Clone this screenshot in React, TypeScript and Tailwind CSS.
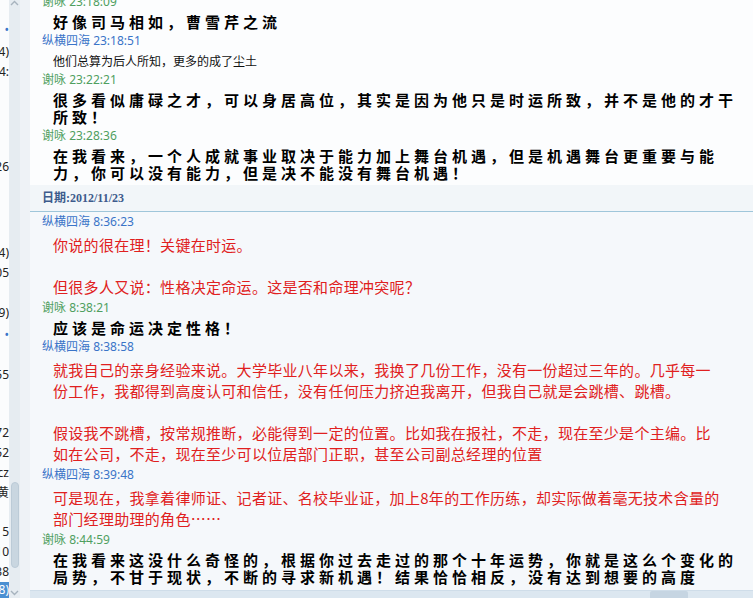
import React from "react";

const FONT = { fontFamily: '"Noto Sans", "Noto Sans CJK SC", sans-serif' };
const BOLD = { fontFamily: '"Noto Sans CJK SC", "Noto Sans", sans-serif' };

type Side = { mt: string; t: string; c?: string };
const sideItems: Side[] = [
  { mt: "mt-[20px]", t: "•", c: "text-[#3a74c8]" },
  { mt: "mt-[2px]", t: "4)" },
  { mt: "mt-[0px]", t: "4:" },
  { mt: "mt-[75px]", t: "26" },
  { mt: "mt-[66px]", t: "4)" },
  { mt: "mt-[0px]", t: "05" },
  { mt: "mt-[20px]", t: "9)" },
  { mt: "mt-[2px]", t: "•", c: "text-[#3a74c8]" },
  { mt: "mt-[20px]", t: "55" },
  { mt: "mt-[38px]", t: "72" },
  { mt: "mt-[0px]", t: "52" },
  { mt: "mt-[0px]", t: "cz" },
  { mt: "mt-[0px]", t: "黄" },
  { mt: "mt-[19px]", t: "5" },
  { mt: "mt-[0px]", t: "10" },
  { mt: "mt-[0px]", t: "38" },
];

function Name({ who, time }: { who: "x" | "z"; time: string }) {
  const cls = who === "x" ? "text-[#4f9f5f]" : "text-[#3a74c8]";
  const n = who === "x" ? "谢咏" : "纵横四海";
  return (
    <div className={`h-[20px] leading-[20px] pl-[12px] text-[12px] whitespace-nowrap ${cls}`}>
      {n} {time}
    </div>
  );
}

function Bold({ lines }: { lines: string[] }) {
  return (
    <div className="pt-[1px] pb-[1px] pl-[23px]" style={BOLD}>
      {lines.map((l, i) => (
        <div
          key={i}
          className="h-[17px] leading-[17px] text-[15px] font-bold tracking-[4px] text-black whitespace-nowrap"
        >
          {l}
        </div>
      ))}
    </div>
  );
}

function Red({ lines }: { lines: string[] }) {
  return (
    <div className="pt-[2px] pb-[1px] pl-[23px]" style={BOLD}>
      {lines.map((l, i) => (
        <div
          key={i}
          className="h-[21px] leading-[21px] text-[15px] tracking-[0.3px] text-[#e02020] whitespace-nowrap"
        >
          {l || "\u00a0"}
        </div>
      ))}
    </div>
  );
}

function Chevron({ up }: { up?: boolean }) {
  return (
    <svg width="9" height="6" viewBox="0 0 9 6">
      <path
        d={up ? "M1 5 L4.5 1.5 L8 5" : "M1 1 L4.5 4.5 L8 1"}
        fill="none"
        stroke="#a7b3be"
        strokeWidth="1.4"
      />
    </svg>
  );
}

export default function App() {
  return (
    <div className="w-[753px] h-[598px] overflow-hidden flex bg-white" style={FONT}>
      {/* clipped sidebar list */}
      <div className="w-[9px] h-full flex flex-col overflow-hidden bg-[#fbfcfd] text-[12px] text-[#222]">
        {sideItems.map((s, i) => (
          <div
            key={i}
            className={`${s.mt} h-[20px] leading-[20px] flex justify-end overflow-hidden shrink-0 ${s.c ?? ""}`}
          >
            <span className="whitespace-nowrap shrink-0">{s.t}</span>
          </div>
        ))}
        <div className="mt-[0px] h-[16px] leading-[16px] flex justify-end overflow-hidden shrink-0 bg-[#4a8fd2] text-white">
          <span className="whitespace-nowrap shrink-0">8)</span>
        </div>
      </div>

      {/* vertical scrollbar */}
      <div className="w-[11px] h-full flex flex-col items-center bg-[#e6ecf1]">
        <div className="h-[14px] flex items-start pt-[0px]">
          <Chevron up />
        </div>
        <div className="flex-1" />
        <div className="w-[8px] h-[86px] rounded-[4px] bg-[#c9d6e0] border border-[#bccbd7]" />
        <div className="h-[16px]" />
        <div className="h-[14px] flex items-end pb-[2px]">
          <Chevron />
        </div>
      </div>

      <div className="w-[10px] h-full bg-[#eef2f6]" />

      {/* chat log */}
      <div className="flex-1 h-full flex flex-col overflow-hidden">
        <div className="bg-[#fcfdfe] pb-[3px]">
          <div className="-mt-[8px]">
            <Name who="x" time="23:18:09" />
          </div>
          <Bold lines={["好像司马相如，曹雪芹之流"]} />
          <Name who="z" time="23:18:51" />
          <div className="pt-[1px] pb-[1px] pl-[23px]" style={BOLD}>
            <div className="h-[17px] leading-[17px] text-[12px] text-[#111] whitespace-nowrap">
              他们总算为后人所知，更多的成了尘土
            </div>
          </div>
          <Name who="x" time="23:22:21" />
          <Bold
            lines={[
              "很多看似庸碌之才，可以身居高位，其实是因为他只是时运所致，并不是他的才干",
              "所致！",
            ]}
          />
          <Name who="x" time="23:28:36" />
          <Bold
            lines={[
              "在我看来，一个人成就事业取决于能力加上舞台机遇，但是机遇舞台更重要与能",
              "力，你可以没有能力，但是决不能没有舞台机遇！",
            ]}
          />
        </div>

        <div className="h-[27px] shrink-0 flex items-center pl-[12px] bg-[#f2f6f9] border-b border-[#9fc6da]">
          <span
            className="text-[12px] font-bold text-[#3d5b8c]"
            style={{ fontFamily: '"Liberation Serif", "Noto Sans CJK SC", serif' }}
          >
            日期:2012/11/23
          </span>
        </div>

        <div className="flex-1 bg-[#f5f8fb] overflow-hidden">
          <Name who="z" time="8:36:23" />
          <Red lines={["你说的很在理！关键在时运。", "", "但很多人又说：性格决定命运。这是否和命理冲突呢？"]} />
          <Name who="x" time="8:38:21" />
          <Bold lines={["应该是命运决定性格！"]} />
          <Name who="z" time="8:38:58" />
          <Red
            lines={[
              "就我自己的亲身经验来说。大学毕业八年以来，我换了几份工作，没有一份超过三年的。几乎每一",
              "份工作，我都得到高度认可和信任，没有任何压力挤迫我离开，但我自己就是会跳槽、跳槽。",
              "",
              "假设我不跳槽，按常规推断，必能得到一定的位置。比如我在报社，不走，现在至少是个主编。比",
              "如在公司，不走，现在至少可以位居部门正职，甚至公司副总经理的位置",
            ]}
          />
          <Name who="z" time="8:39:48" />
          <Red
            lines={[
              "可是现在，我拿着律师证、记者证、名校毕业证，加上8年的工作历练，却实际做着毫无技术含量的",
              "部门经理助理的角色……",
            ]}
          />
          <Name who="x" time="8:44:59" />
          <Bold
            lines={[
              "在我看来这没什么奇怪的，根据你过去走过的那个十年运势，你就是这么个变化的",
              "局势，不甘于现状，不断的寻求新机遇！结果恰恰相反，没有达到想要的高度",
            ]}
          />
        </div>

        <div className="h-[8px] shrink-0 flex bg-[#dce7f0] border-t border-[#cfdde9]">
          <div className="w-[620px]" />
          <div className="w-[38px] h-full bg-[#c6d5e2] rounded-t-[2px]" />
        </div>
      </div>
    </div>
  );
}
